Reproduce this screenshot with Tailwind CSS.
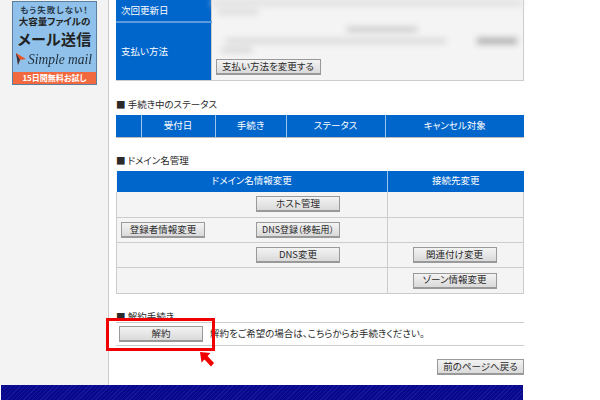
<!DOCTYPE html>
<html lang="ja">
  <head>
    <meta charset="UTF-8" />
    <title>ドメイン名管理</title>
    <script src="https://cdn.jsdelivr.net/npm/@tailwindcss/browser@4"></script>
  </head>

  <body class="bg-white w-[600px] h-[400px] overflow-hidden font-['Noto_Sans_CJK_JP','Liberation_Sans',sans-serif] [font-feature-settings:'palt'] text-[9.5px] leading-none text-[#2a2a2a]">
    <div class="relative w-[600px] h-[400px] overflow-hidden">
      <div class="flex h-[385px]">
        <!-- sidebar -->
        <aside class="w-[109px] shrink-0 bg-[#f3f3f3] border-r border-[#ccc] pl-[12px] pt-[1px]">
          <div class="w-[85px] h-[84px] bg-[#8fc1ea] border border-[#5a7f9f] flex flex-col items-center text-[#2a3a4a]">
            <div class="text-[8.5px] font-bold mt-[3px] h-[9px] flex items-center tracking-[1px] whitespace-nowrap">もう失敗しない！</div>
            <div class="text-[9.5px] font-bold mt-[3px] h-[10px] flex items-center text-[#222] whitespace-nowrap">大容量ファイルの</div>
            <div class="text-[15px] font-bold mt-[4px] h-[15px] flex items-center text-[#222] tracking-[0.3px] whitespace-nowrap">メール送信</div>
            <div class="flex items-center self-start ml-[2px] mt-[5px] h-[16px]">
              <svg width="12" height="14" viewBox="0 0 12 14">
                <path d="M1 1 L11 7 L5 8 L3 13 Z" fill="#e8562a" />
                <path d="M1 1 L5 8 L3 13 Z" fill="#2b3a4a" />
              </svg>
              <span class="inline-block ml-[1px] font-['Liberation_Serif',serif] italic text-[13.5px] text-[#1f2d3a] whitespace-nowrap scale-y-[1.15]">Simple mail</span>
            </div>
            <div class="mt-auto w-full h-[12px] bg-[#f2693f] text-white text-[8px] font-bold flex items-center justify-center whitespace-nowrap">15日間無料お試し</div>
          </div>
        </aside>

        <!-- main -->
        <main class="w-[415px] pl-[7px] shrink-0">
          <table class="w-[408px] table-fixed border-collapse">
            <tbody>
              <tr class="h-[22px]">
                <th class="w-[95px] bg-[#0066cc] text-white font-normal text-left pl-[5px] border-b-2 border-[#5b9bdc]">次回更新日</th>
                <td rowspan="2" class="bg-[#f4f4f4] border border-t-0 border-[#ccc] align-bottom p-0">
                  <div class="h-[59px] overflow-hidden blur-[3px]">
                    <div class="h-[6px] bg-[#e0e0e0]"></div>
                    <div class="w-[40px] h-[4px] bg-[#d4d4d4] mt-[4px] ml-[6px]"></div>
                    <div class="w-[70px] h-[5px] bg-[#c8c8c8] mt-[13px] ml-[135px]"></div>
                    <div class="w-[220px] h-[4px] bg-[#d0d0d0] mt-[7px] ml-[14px]"></div>
                    <div class="w-[40px] h-[6px] bg-[#aaa] -mt-[5px] ml-[265px]"></div>
                    <div class="w-[30px] h-[4px] bg-[#ccc] mt-[4px] ml-[10px]"></div>
                  </div>
                  <div class="pl-[4px] pb-[5px]">
                    <button class="w-[105px] h-[16px] bg-linear-to-b from-[#f3f3f3] to-[#dadada] border border-[#999] border-b-2 leading-none align-middle text-[#2a2a2a]">支払い方法を変更する</button>
                  </div>
                </td>
              </tr>
              <tr class="h-[58px]">
                <th class="bg-[#0066cc] text-white font-normal text-left pl-[5px] border-b border-[#ccc]">支払い方法</th>
              </tr>
            </tbody>
          </table>

          <h2 class="font-normal mt-[19px] h-[10px] flex items-center whitespace-nowrap">■ 手続き中のステータス</h2>
          <table class="w-[408px] table-fixed border-collapse mt-[5px] text-center text-white bg-[#0066cc]">
            <tbody>
              <tr class="h-[22px] border-b border-[#bbb]">
                <th class="w-[25px] font-normal border-r border-[#9cc3ea]"></th>
                <th class="w-[74px] font-normal border-r border-[#9cc3ea]">受付日</th>
                <th class="w-[71px] font-normal border-r border-[#9cc3ea]">手続き</th>
                <th class="w-[99px] font-normal border-r border-[#9cc3ea]">ステータス</th>
                <th class="font-normal">キャンセル対象</th>
              </tr>
            </tbody>
          </table>

          <h2 class="font-normal mt-[18px] h-[10px] flex items-center whitespace-nowrap">■ ドメイン名管理</h2>
          <table class="w-[408px] table-fixed border-collapse mt-[5px] text-center bg-[#f4f4f4]">
            <thead>
              <tr class="h-[21px] bg-[#0066cc] text-white">
                <th colspan="2" class="w-[271px] font-normal border-r border-[#9cc3ea]">ドメイン名情報変更</th>
                <th class="font-normal">接続先変更</th>
              </tr>
            </thead>
            <tbody>
              <tr class="h-[26px]">
                <td class="w-[135px] border-l border-b border-[#ccc]"></td>
                <td class="border-b border-r border-[#ccc] text-left pl-[4px]">
                  <button class="w-[84px] h-[16px] bg-linear-to-b from-[#f3f3f3] to-[#dadada] border border-[#999] border-b-2 leading-none align-middle">ホスト管理</button>
                </td>
                <td class="border-b border-r border-[#ccc]"></td>
              </tr>
              <tr class="h-[25px]">
                <td class="border-l border-b border-[#ccc] text-left pl-[4px]">
                  <button class="w-[84px] h-[16px] bg-linear-to-b from-[#f3f3f3] to-[#dadada] border border-[#999] border-b-2 leading-none align-middle">登録者情報変更</button>
                </td>
                <td class="border-b border-r border-[#ccc] text-left pl-[4px]">
                  <button class="w-[84px] h-[16px] bg-linear-to-b from-[#f3f3f3] to-[#dadada] border border-[#999] border-b-2 text-[9px] leading-none align-middle whitespace-nowrap">DNS登録（移転用）</button>
                </td>
                <td class="border-b border-r border-[#ccc]"></td>
              </tr>
              <tr class="h-[25px]">
                <td class="border-l border-b border-[#ccc]"></td>
                <td class="border-b border-r border-[#ccc] text-left pl-[4px]">
                  <button class="w-[84px] h-[16px] bg-linear-to-b from-[#f3f3f3] to-[#dadada] border border-[#999] border-b-2 leading-none align-middle">DNS変更</button>
                </td>
                <td class="border-b border-r border-[#ccc] pr-[2px]">
                  <button class="w-[84px] h-[16px] bg-linear-to-b from-[#f3f3f3] to-[#dadada] border border-[#999] border-b-2 leading-none align-middle">関連付け変更</button>
                </td>
              </tr>
              <tr class="h-[26px]">
                <td class="border-l border-b border-[#ccc]"></td>
                <td class="border-b border-r border-[#ccc]"></td>
                <td class="border-b border-r border-[#ccc] pr-[2px]">
                  <button class="w-[84px] h-[16px] bg-linear-to-b from-[#f3f3f3] to-[#dadada] border border-[#999] border-b-2 leading-none align-middle">ゾーン情報変更</button>
                </td>
              </tr>
            </tbody>
          </table>

          <h2 class="font-normal mt-[18px] h-[10px] flex items-center whitespace-nowrap">■ 解約手続き</h2>
          <div class="w-[408px] h-[24px] border-y border-[#ccc] flex items-center">
            <button class="w-[84px] h-[16px] ml-[3px] bg-linear-to-b from-[#f3f3f3] to-[#dadada] border border-[#999] border-b-2 leading-none">解約</button>
            <span class="ml-[7px] whitespace-nowrap">解約をご希望の場合は、こちらからお手続きください。</span>
          </div>
          <div class="w-[408px] flex justify-end mt-[13px]">
            <button class="w-[87px] h-[16px] bg-linear-to-b from-[#f3f3f3] to-[#dadada] border border-[#999] border-b-2 leading-none">前のページへ戻る</button>
          </div>
        </main>
      </div>

      <!-- footer -->
      <footer class="ml-[1px] w-[522px] h-[15px] bg-[repeating-linear-gradient(135deg,#08088a_0px,#08088a_2px,#16169c_2px,#16169c_3px)]"></footer>

      <!-- annotation -->
      <div class="absolute left-[106px] top-[318px] w-[109px] h-[33px] border-[3px] border-[#f00000]"></div>
      <svg class="absolute left-[199px] top-[351px]" width="16" height="17" viewBox="0 0 16 17">
        <path d="M1 1 L11.5 2 L8.5 5 L15 12 L12 15.5 L5.5 8.5 L2.5 11.5 Z" fill="#f00000" />
      </svg>
    </div>
  </body>
</html>
